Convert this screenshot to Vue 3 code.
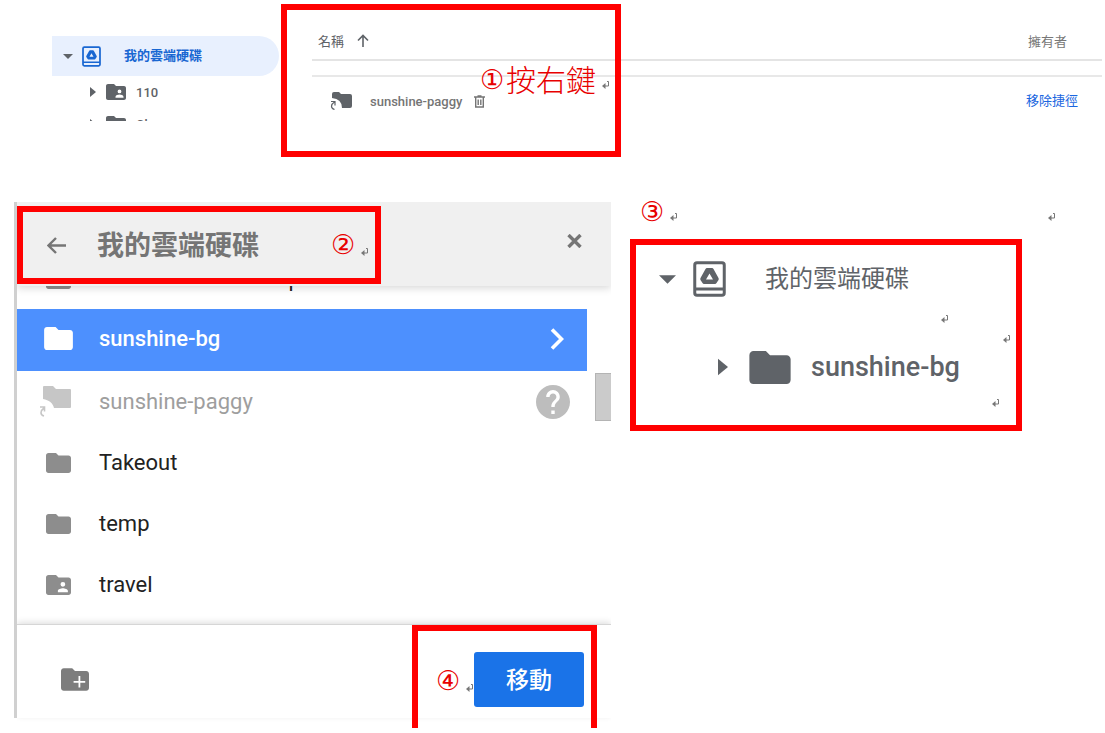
<template>
  <main class="guide">
    <section class="drive">
      <nav class="side">
        <a href="#" class="side-row active">
          <Icon name="down" class="caret-down" />
          <Icon name="drive" class="side-drive" />
          <span class="side-title">我的雲端硬碟</span>
        </a>
        <a v-for="item in sideFolders" :key="item.name" href="#" class="side-row child">
          <Icon name="right" class="caret-right" />
          <Icon :name="item.icon" class="side-folder" />
          <span>{{ item.name }}</span>
        </a>
      </nav>

      <table class="files">
        <thead>
          <tr>
            <th class="col-name">
              <span class="cell">名稱 <Icon name="up" class="sort" /></span>
            </th>
            <th class="col-owner">擁有者</th>
          </tr>
        </thead>
        <tbody>
          <tr>
            <td class="col-name">
              <span class="cell file">
                <Icon name="shortcut" class="file-icon" />
                <span>sunshine-paggy</span>
                <Icon name="trash" class="trash" />
              </span>
            </td>
            <td class="col-action"><a href="#">移除捷徑</a></td>
          </tr>
        </tbody>
      </table>

      <div class="frame frame-list"></div>
      <p class="note note-list">
        <span class="num">①</span><span class="note-text">按右鍵</span>
        <Icon name="enter" class="enter" />
      </p>
    </section>

    <section class="lower">
      <div class="dialog">
        <header class="dialog-head">
          <button type="button" class="plain" aria-label="返回"><Icon name="back" class="back" /></button>
          <h2>我的雲端硬碟</h2>
          <button type="button" class="plain close-btn" aria-label="關閉"><Icon name="close" class="close" /></button>
          <div class="frame frame-head"></div>
          <p class="note note-head"><span class="num">②</span><Icon name="enter" class="enter" /></p>
        </header>

        <div class="dialog-body">
          <ul class="folders">
            <li v-for="item in folders" :key="item.name" :class="item.state">
              <span class="folder-slot"><Icon :name="item.icon" :class="'icon-' + item.icon" /></span>
              <span class="folder-name">{{ item.name }}</span>
              <Icon v-if="item.state === 'selected'" name="chevron" class="chevron" />
              <Icon v-if="item.state === 'disabled'" name="help" class="help" />
            </li>
          </ul>
          <div class="scroll"><div class="thumb"></div></div>
        </div>

        <footer class="dialog-foot">
          <button type="button" class="plain" aria-label="新增資料夾"><Icon name="add" class="add" /></button>
          <button type="button" class="move">移動</button>
          <div class="frame frame-foot"></div>
          <p class="note note-foot"><span class="num">④</span><Icon name="enter" class="enter" /></p>
        </footer>
      </div>

      <div class="result">
        <div class="result-head">
          <span class="num">③</span>
          <Icon name="enter" class="enter" />
          <Icon name="enter" class="enter far" />
        </div>
        <div class="tree">
          <div class="tree-row root">
            <Icon name="down" class="tree-down" />
            <Icon name="drive" class="tree-drive" />
            <span>我的雲端硬碟</span>
          </div>
          <div class="tree-row leaf">
            <Icon name="right" class="tree-right" />
            <Icon name="folder" class="tree-folder" />
            <span>sunshine-bg</span>
          </div>
          <Icon name="enter" class="enter mark mark-a" />
          <Icon name="enter" class="enter mark mark-b" />
          <Icon name="enter" class="enter mark mark-c" />
        </div>
      </div>
    </section>
  </main>
</template>

<script setup>
import { h } from "vue";

const folderPath =
	"M10 4H4c-1.1 0-2 .9-2 2v12c0 1.1.9 2 2 2h16c1.1 0 2-.9 2-2V8c0-1.1-.9-2-2-2h-8l-2-2z";
const personPath =
	"M15.500 9.500a1.900 1.900 0 1 1 0 3.800a1.900 1.900 0 0 1 0-3.800zM19.500 17.800h-8v-1c0-1.500 2.500-2.200 4-2.200s4 .7 4 2.200z";

// fill: solid shape, line: stroked shape, w: stroke width
const icons = {
	down: { box: "0 0 10 5", fill: "M0 0H10L5 5Z" },
	right: { box: "0 0 6 10", fill: "M0 0L6 5L0 10Z" },
	drive: {
		box: "0 0 33 36",
		fill: "M14 7H19Q20 7 20.500 8L25.500 17Q26 18 25.500 19L23.500 22Q23 23 22 23H11Q10 23 9.500 22L7.500 19Q7 18 7.500 17L12.500 8Q13 7 14 7ZM16.500 12.500L13 18.500H20Z",
		line: "M4 1.750H29Q31.250 1.750 31.250 4V32Q31.250 34.250 29 34.250H4Q1.750 34.250 1.750 32V4Q1.750 1.750 4 1.750ZM2 28H31",
		w: 3,
	},
	folder: { box: "2 4 20 16", fill: folderPath },
	shared: { box: "2 4 20 16", fill: folderPath + personPath },
	add: {
		box: "2 4 20 16",
		fill: folderPath + "M14.500 9.500V13H11V14.300H14.500V17.800H15.800V14.300H19.300V13H15.800V9.500Z",
	},
	shortcut: {
		box: "0 0 22 18",
		fill: "M4 0H9L11 2H20Q22 2 22 4V14Q22 16 20 16H12Q12 7 2 6V2Q2 0 4 0Z",
		line: "M4.500 17.500C.5 16 .5 12.500 4.500 10M1 9.500H5V13.500",
		w: 1.2,
	},
	alias: {
		box: "0 0 32 31",
		fill: "M5 0H14L17 3H31Q32 3 32 4V21Q32 22 31 22H15C14 17 10 14 4 13V1Q4 0 5 0Z",
		line: "M5 30C1 29 1 25 5 22M1 21H5.500V25.500",
		w: 1.6,
	},
	up: { box: "0 0 12 13", line: "M6 13V1.500M1 6.500L6 1.500L11 6.500", w: 1.6 },
	trash: {
		box: "0 0 11 13",
		line: "M0 2H11M3.500 1H7.500M1.700 2.500V12H9.300V2.500M4.200 4.500V10M6.800 4.500V10",
		w: 1.4,
	},
	back: { box: "0 0 19 17", line: "M19 8.500H2M9 1L1.500 8.500L9 16", w: 2.4 },
	close: { box: "0 0 15 14", line: "M1.500 1L13.500 13M13.500 1L1.500 13", w: 3.4 },
	chevron: { box: "0 0 14 22", line: "M2 1.500L11.500 11L2 20.500", w: 3.6 },
	help: {
		box: "2 2 20 20",
		fill: "M12 2C6.480 2 2 6.480 2 12s4.480 10 10 10 10-4.480 10-10S17.520 2 12 2zm1 17h-2v-2h2v2zm2.070-7.750l-.9.920C13.450 12.900 13 13.500 13 15h-2v-.5c0-1.100.450-2.100 1.170-2.830l1.240-1.260c.370-.360.590-.860.590-1.410 0-1.100-.9-2-2-2s-2 .9-2 2H8c0-2.210 1.790-4 4-4s4 1.790 4 4c0 .880-.360 1.680-.930 2.250z",
	},
	enter: { box: "0 0 8 8", fill: "M0 5L3.500 2V8Z", line: "M3 5H6.500V.5H5", w: 1 },
};

function Icon(props) {
	const icon = icons[props.name];
	return h("svg", { viewBox: icon.box, "aria-hidden": "true" }, [
		icon.fill && h("path", { d: icon.fill, fill: "currentColor", "fill-rule": "evenodd" }),
		icon.line &&
			h("path", {
				d: icon.line,
				fill: "none",
				stroke: "currentColor",
				"stroke-width": icon.w,
			}),
	]);
}
Icon.props = ["name"];

const sideFolders = [
	{ name: "110", icon: "shared" },
	{ name: "Ch", icon: "shared" },
];

const folders = [
	{ name: "Remote art roadmap", icon: "folder", state: "" },
	{ name: "sunshine-bg", icon: "folder", state: "selected" },
	{ name: "sunshine-paggy", icon: "alias", state: "disabled" },
	{ name: "Takeout", icon: "folder", state: "" },
	{ name: "temp", icon: "folder", state: "" },
	{ name: "travel", icon: "shared", state: "" },
];
</script>

<style>
body {
  margin: 0;
  background: #fff;
}
</style>

<style scoped>
.guide {
  font-family: Roboto, "Noto Sans CJK TC", sans-serif;
  color: #5f6368;
  overflow: hidden;
}

svg {
  display: block;
  flex: none;
}

a {
  color: inherit;
  text-decoration: none;
}

.plain {
  border: 0;
  padding: 0;
  background: none;
  color: inherit;
}

/* red markup */
.frame {
  position: absolute;
  box-sizing: border-box;
  border: 6px solid #f00;
  pointer-events: none;
}

.note {
  position: absolute;
  display: flex;
  align-items: center;
  margin: 0;
  color: #e80000;
  pointer-events: none;
}

.num {
  width: 24px;
  font-family: "DejaVu Sans", "Noto Sans CJK TC", sans-serif;
  font-size: 27px;
  line-height: 24px;
  text-align: center;
  color: #e80000;
}

.note-text {
  font-family: "Noto Sans CJK TC", sans-serif;
  font-weight: 300;
  font-size: 30px;
  line-height: 32px;
}

.enter {
  width: 8px;
  height: 8px;
  color: #777;
}

/* drive list */
.drive {
  position: relative;
  display: flex;
  align-items: flex-start;
  height: 202px;
}

.side {
  flex: none;
  width: 227px;
  height: 85px;
  margin: 36px 33px 0 52px;
  overflow: hidden;
  font-size: 13px;
  font-weight: 500;
}

.side-row {
  display: flex;
  align-items: center;
  height: 32px;
}

.side-row.active {
  height: 40px;
  padding-left: 11px;
  border-radius: 0 20px 20px 0;
  background: #e8f0fe;
  color: #1967d2;
}

.side-row.child {
  padding-left: 38px;
}

.caret-down {
  width: 10px;
  height: 5px;
  color: #5f6368;
}

.side-drive {
  width: 19px;
  height: 21px;
  margin: 0 23px 0 9px;
}

.side-title {
  font-weight: 700;
  line-height: 16px;
}

.caret-right {
  width: 6px;
  height: 10px;
}

.side-folder {
  width: 20px;
  height: 16px;
  margin: 0 10px;
}

.files {
  flex: 1;
  margin: 7px 3px 0 0;
  border-collapse: separate;
  border-spacing: 0 14px;
  font-size: 13px;
}

.files th,
.files td {
  box-sizing: border-box;
  padding: 0;
  text-align: left;
  vertical-align: middle;
}

.files th {
  height: 40px;
  border-bottom: 2px solid #e4e4e4;
  font-weight: 400;
}

.files td {
  height: 50px;
  border-top: 2px solid #e8e8e8;
}

.cell {
  display: flex;
  align-items: center;
  padding-left: 6px;
}

.sort {
  width: 12px;
  height: 13px;
  margin-left: 13px;
}

.file {
  padding-left: 18px;
  font-weight: 500;
  color: #757575;
}

.file-icon {
  width: 22px;
  height: 18px;
  margin-right: 18px;
  color: #5f6368;
}

.trash {
  width: 11px;
  height: 13px;
  margin-left: 12px;
}

.files .col-owner,
.files .col-action {
  width: 76px;
}

.files .col-owner {
  padding-left: 2px;
  color: #777;
}

.files .col-action {
  padding-bottom: 4px;
}

.col-action a {
  color: #1a66e0;
}

.frame-list {
  top: 4px;
  left: 281px;
  width: 340px;
  height: 153px;
}

.note-list {
  top: 62px;
  left: 480px;
}

.note-list .enter {
  margin: 14px 0 0 6px;
}

.note-list .num {
  margin: 4px 2px 0 0;
}

/* move dialog */
.lower {
  display: grid;
  grid-template-columns: minmax(0, 597fr) minmax(0, 494fr);
  align-items: start;
  padding: 0 0 16px 14px;
}

.dialog {
  border-left: 3px solid #d0d0d0;
}

.dialog-head {
  position: relative;
  z-index: 1;
  display: flex;
  align-items: center;
  box-sizing: border-box;
  height: 84px;
  padding: 3px 29px 0 30px;
  background: #f0f0f0;
  box-shadow: 0 2px 8px rgba(0, 0, 0, 0.16);
  clip-path: inset(0 0 -12px 0);
  color: #757575;
}

.back {
  width: 19px;
  height: 17px;
}

.dialog-head h2 {
  margin: 0 0 0 31px;
  font-size: 27px;
  font-weight: 700;
  line-height: 36px;
}

.close-btn {
  margin: 0 0 9px auto;
}

.close {
  width: 15px;
  height: 14px;
}

.frame-head {
  top: 4px;
  left: 0;
  width: 364px;
  height: 78px;
}

.note-head {
  top: 31px;
  left: 314px;
}

.note-head .enter,
.note-foot .enter {
  margin: 14px 0 0 6px;
}

.dialog-body {
  display: flex;
  height: 338px;
  overflow: hidden;
}

.folders {
  flex: 1;
  margin: -38px 0 0;
  padding: 0;
  list-style: none;
  font-size: 22px;
  color: #222;
}

.folders li {
  display: flex;
  align-items: center;
  box-sizing: border-box;
  height: 61px;
  padding: 0 17px 0 22px;
}

.folders li.selected {
  height: 62px;
  padding-right: 23px;
  padding-bottom: 3px;
  background: #4d90fe;
  color: #fff;
  font-weight: 500;
}

.folders li.disabled {
  color: #9e9e9e;
}

.folder-slot {
  display: flex;
  justify-content: center;
  width: 38px;
  margin-right: 22px;
  color: #8d8d8d;
}

.folder-name {
  flex: 1;
}

.icon-folder,
.icon-shared {
  width: 25px;
  height: 20px;
}

.selected .folder-slot {
  color: #fff;
}

.selected .icon-folder {
  width: 29px;
  height: 23px;
}

.disabled .folder-slot {
  justify-content: flex-start;
  color: #c6c6c6;
}

.icon-alias {
  width: 32px;
  height: 31px;
}

.chevron {
  width: 14px;
  height: 22px;
}

.help {
  width: 34px;
  height: 34px;
  color: #bdbdbd;
}

.scroll {
  width: 16px;
  padding: 87px 0 0 8px;
}

.thumb {
  box-sizing: border-box;
  height: 48px;
  border: 1px solid #b4b4b4;
  border-right: 0;
  background: #cbcbcb;
}

.dialog-foot {
  position: relative;
  display: flex;
  align-items: center;
  justify-content: space-between;
  box-sizing: border-box;
  height: 94px;
  padding: 16px 27px 0 44px;
  border-top: 1px solid #d6d6d6;
  box-shadow: 0 -2px 6px rgba(0, 0, 0, 0.12);
  clip-path: inset(-8px 0 -12px 0);
  color: #7d7d7d;
}

.add {
  width: 28px;
  height: 25px;
}

.move {
  width: 110px;
  height: 55px;
  border: 0;
  border-radius: 3px;
  padding: 0 0 3px;
  background: #1a73e8;
  color: #fff;
  font: 500 23px Roboto, "Noto Sans CJK TC", sans-serif;
}

.frame-foot {
  top: 0;
  right: 14px;
  width: 185px;
  height: 103px;
  border-bottom: 0;
}

.note-foot {
  top: 44px;
  right: 137px;
}

/* result tree */
.result {
  padding: 0 83px 0 19px;
}

.result-head {
  display: flex;
  align-items: center;
  height: 20px;
  padding-left: 10px;
  margin: 0 -34px 17px 0;
}

.result-head .enter {
  margin: 10px 0 0 6px;
}

.result-head .far {
  margin-left: auto;
}

.tree {
  position: relative;
  box-sizing: border-box;
  height: 192px;
  padding: 12px 0 0 23px;
  border: 6px solid #f00;
}

.tree-row {
  display: flex;
  align-items: center;
  height: 44px;
}

.root {
  font-size: 24px;
  line-height: 32px;
}

.leaf {
  margin-top: 44px;
  padding-left: 59px;
  font-size: 27px;
  font-weight: 500;
}

.tree-down {
  width: 17px;
  height: 9px;
}

.tree-drive {
  width: 33px;
  height: 36px;
  margin: 0 39px 0 17px;
}

.tree-right {
  width: 10px;
  height: 20px;
}

.tree-folder {
  width: 42px;
  height: 33px;
  margin: 0 20px 0 21px;
}

.mark {
  position: absolute;
}

.mark-a {
  top: 70px;
  right: 67px;
}

.mark-b {
  top: 90px;
  right: 5px;
}

.mark-c {
  top: 154px;
  right: 16px;
}
</style>
